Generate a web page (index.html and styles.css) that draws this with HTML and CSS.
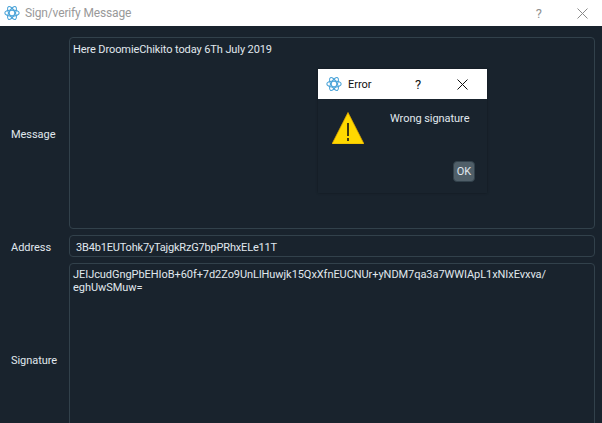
FILE: index.html
```html
<!DOCTYPE html>
<html lang="en">
<head>
<meta charset="utf-8">
<title>Sign/verify Message</title>
<link rel="stylesheet" href="styles.css">
</head>
<body>
<svg class="defs" width="0" height="0" aria-hidden="true">
  <symbol id="atom" viewBox="0 0 20 20">
    <g fill="none" stroke="#4aa3d8" stroke-width="1.3">
      <ellipse cx="10" cy="10" rx="9" ry="3.8"/>
      <ellipse cx="10" cy="10" rx="9" ry="3.8" transform="rotate(60 10 10)"/>
      <ellipse cx="10" cy="10" rx="9" ry="3.8" transform="rotate(120 10 10)"/>
      <circle cx="10" cy="10" r="3.6" stroke-width="1.1"/>
    </g>
  </symbol>
</svg>
<div class="window">
  <header class="titlebar">
    <svg class="app-icon"><use href="#atom"/></svg>
    <span class="title">Sign/verify Message</span>
    <span class="help">?</span>
    <svg class="close" viewBox="0 0 11 11"><path d="M.5.5l10 10M10.5.5l-10 10" stroke="#8a8a8a" fill="none"/></svg>
  </header>
  <main class="form">
    <label class="label">Message</label>
    <div class="box message">Here DroomieChikito today 6Th July 2019</div>
    <label class="label">Address</label>
    <div class="box address">3B4b1EUTohk7yTajgkRzG7bpPRhxELe11T</div>
    <label class="label">Signature</label>
    <div class="box signature">JEIJcudGngPbEHIoB+60f+7d2Zo9UnLlHuwjk15QxXfnEUCNUr+yNDM7qa3a7WWIApL1xNIxEvxva/<br>eghUwSMuw=</div>
  </main>
  <section class="dialog">
    <header class="dialog-bar">
      <svg class="dialog-icon"><use href="#atom"/></svg>
      <span class="dialog-title">Error</span>
      <span class="dialog-help">?</span>
      <svg class="dialog-close" viewBox="0 0 11 11"><path d="M.5.5l10 10M10.5.5l-10 10" stroke="#111" fill="none"/></svg>
    </header>
    <div class="dialog-body">
      <svg class="warn" viewBox="0 0 32 32"><path d="M16 .5L32 32H0z" fill="#ffd800" stroke="#e0a800" stroke-width=".8"/><path d="M15.2 11h1.6v13h-1.6zM15.2 26h1.6v3h-1.6z" fill="#111"/></svg>
      <p class="dialog-text">Wrong signature</p>
    </div>
    <div class="dialog-actions"><button class="ok">OK</button></div>
  </section>
</div>
</body>
</html>
```
FILE: styles.css
```css
* { box-sizing: border-box; }
html, body { margin: 0; height: 100%; overflow: hidden; }
body { background: #19232d; font-family: Roboto, "Noto Sans", sans-serif; font-size: 11px; color: #e0e8ee; }
.defs { position: absolute; }
.window { position: relative; width: 602px; height: 423px; overflow: hidden; }
.titlebar { height: 26px; background: #fff; display: flex; align-items: center; padding-left: 4px; color: #999; }
.app-icon { width: 16px; height: 16px; margin-right: 5px; }
.title { font-size: 12px; flex: 1; letter-spacing: -0.15px; }
.help { font-size: 13px; margin-right: 35px; color: #909090; }
.close { width: 11px; height: 11px; margin-right: 14px; }
.form { display: grid; grid-template-columns: 69px 526px; grid-template-rows: 192px 22px 192px; row-gap: 6px; padding-top: 11px; }
.label { align-self: center; padding-left: 11px; padding-top: 2px; letter-spacing: -0.05px; }
.box { border: 1px solid #32414b; border-radius: 4px; padding: 3px 3px; line-height: 13px; white-space: nowrap; overflow: hidden; }
.message { padding-top: 5px; letter-spacing: -0.1px; }
.signature { padding-top: 4px; letter-spacing: -0.06px; }
.address { padding: 5px 6px 4px; letter-spacing: -0.18px; }
.dialog { position: absolute; left: 318px; top: 69px; width: 169px; height: 124px; background: #19232d; box-shadow: 0 0 2px #10171e; }
.dialog-bar { height: 30px; background: #fff; display: flex; align-items: center; padding-left: 8px; color: #111; }
.dialog-icon { width: 16px; height: 16px; margin-right: 6px; }
.dialog-title { font-size: 11px; width: 67px; }
.dialog-help { font-size: 13px; width: 42px; }
.dialog-close { width: 11px; height: 11px; }
.dialog-body { display: flex; height: 62px; padding: 13px 0 0 14px; }
.warn { width: 32px; height: 32px; }
.dialog-text { margin: 0 0 0 26px; line-height: 14px; letter-spacing: -0.05px; }
.dialog-actions { display: flex; justify-content: flex-end; padding-right: 12px; }
.ok { width: 22px; height: 21px; padding: 0; border: 1px solid #32414b; border-radius: 4px; background: #505f69; color: #e0e8ee; font: inherit; }
```
